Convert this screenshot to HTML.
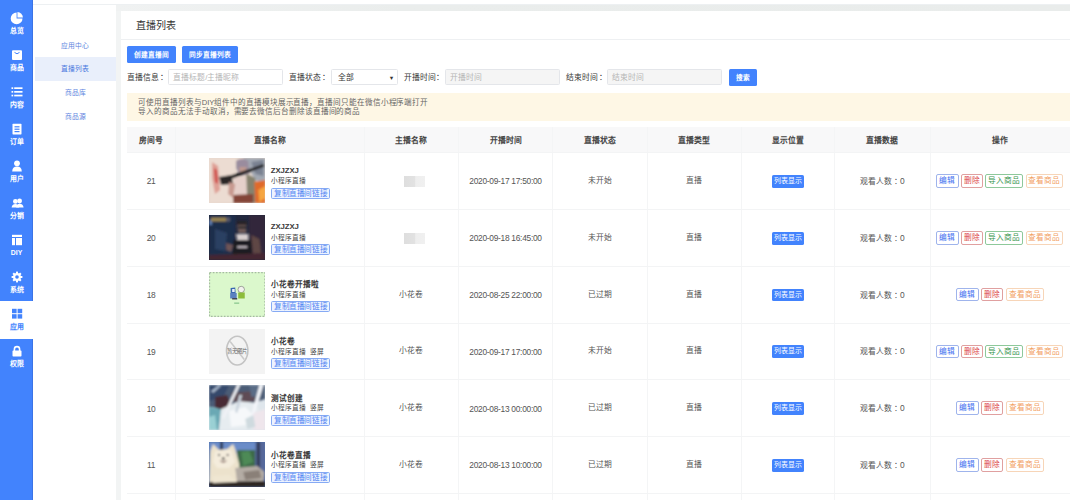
<!DOCTYPE html><html lang="zh-CN"><head><meta charset="utf-8"><style>
*{margin:0;padding:0;box-sizing:border-box;}
html,body{width:1070px;height:500px;overflow:hidden;background:#fff;font-family:"Liberation Sans",sans-serif;}
div,span{position:absolute;white-space:nowrap;}
.c{transform:translateX(-50%);}
#side{left:0;top:0;width:33.2px;height:500px;background:#4283fd;}
#sideedge{left:32.4px;top:0;width:0.8px;height:500px;background:#3b74e6;}
.si{left:0;width:33.2px;height:37px;color:#fff;font-size:6.9px;text-align:center;}
.si .lb{left:0;right:0;top:22px;line-height:8px;font-weight:bold;}
.si svg{position:absolute;left:10.6px;top:7px;}
.si.act{background:#fff;color:#4283fd;height:38px;}
#topline{left:33.2px;top:0;width:1037px;height:5.2px;background:#fff;border-bottom:0.5px solid #edf0f2;}
#side2{left:33.2px;top:5.2px;width:82.3px;height:495px;background:#fff;}
.s2{left:35px;width:80.5px;height:23.6px;line-height:23.6px;text-align:center;font-size:6.8px;color:#5f86e0;}
.s2.act{background:#e9effb;color:#4a78e0;}
#gap{left:115.5px;top:5.2px;width:954.5px;height:495px;background:#f2f4f4;}
#gapt{left:115.5px;top:5.2px;width:954.5px;height:5.4px;background:linear-gradient(90deg,#f0f2f2,#eaedec 30%,#e9eceb);}
#card{left:121px;top:10.6px;width:949px;height:489.4px;background:#fff;}
#title{left:135.5px;top:10.6px;height:29px;line-height:29px;font-size:10px;color:#333;}
#hline{left:121px;top:39.4px;width:949px;height:0.6px;background:#eef0f2;}
.btn{height:17.3px;line-height:17.3px;background:#4283fd;color:#fff;font-size:6.7px;font-weight:bold;text-align:center;border-radius:1.5px;}
.lbl{font-size:7.8px;color:#383838;line-height:17.6px;height:16px;}
.colon{position:relative;left:0.7px;}
.colon2{position:relative;left:1.5px;}
.inp{height:16px;border:0.6px solid #e4e6ea;border-radius:1.5px;font-size:7.8px;color:#b6b6b6;line-height:16.6px;padding-left:4px;background:#fff;}
.inp.dis{background:#f5f5f5;}
#banner{left:127.3px;top:92.6px;width:942.7px;height:28px;background:#fef7e5;color:#666;font-size:7.6px;letter-spacing:-0.08px;line-height:9.7px;padding:5.1px 0 0 11.2px;}
#thead{left:127px;top:127px;width:943px;height:25.5px;background:#f8f8f9;}
.hl{left:127px;width:943px;height:0.6px;background:#f3f4f5;}
.vl{width:0.6px;background:#f4f5f6;}
.th{font-size:7.8px;color:#444;font-weight:bold;line-height:10px;}
.td{font-size:7.8px;color:#555;line-height:10px;}
.dt{font-size:8.4px;letter-spacing:-0.28px;color:#555;line-height:10px;}
.thumb{left:208.9px;width:56.4px;height:45px;overflow:hidden;}
.t1{left:270.8px;font-size:7.6px;font-weight:bold;color:#3a3a3a;line-height:9px;}
.t2{left:270.9px;font-size:6.7px;color:#444;line-height:8px;}
.tag{left:271.3px;height:11.2px;width:58.6px;border:0.7px solid #86aaf4;background:#edf3ff;border-radius:1.6px;color:#5286f2;font-size:7.6px;letter-spacing:-0.4px;line-height:10px;text-align:center;}
.blue{height:12.8px;width:32.2px;background:#4283fd;color:#fff;font-size:6.9px;line-height:12.8px;text-align:center;border-radius:1.6px;}
.op{height:13.6px;line-height:12.6px;border:0.75px solid;border-radius:2px;font-size:7.7px;text-align:center;background:#fff;}
.op.e{border-color:#9fb4ec;color:#3f6ff0;}
.op.d{border-color:#e0a0a0;color:#dc4545;}
.op.i{border-color:#8ec99b;color:#38954e;}
.op.v{border-color:#f7d5b8;color:#f2a062;}
.blur{width:21px;height:11px;background:linear-gradient(90deg,#dedede,#e2e2e2 50%,#eeeeee 56%,#f0f0f0);filter:blur(0.7px);}
</style></head><body>
<div id="side"></div><div id="sideedge"></div>
<div class="si" style="top:5px"><svg width="14" height="14" viewBox="0 0 14 14" style="left:9.75px;top:6.5px;overflow:visible"><path d="M6.6 6.4 L6.6 0.5 A5.9 5.9 0 1 0 12.5 6.4 Z" fill="#fff"/><path d="M7.45 5.55 L7.45 0.1 A5.5 5.5 0 0 1 12.9 5.55 Z" fill="#fff"/></svg><div class="lb">总览</div></div>
<div class="si" style="top:42px"><svg width="12" height="12" viewBox="0 0 12 12"><rect x="1" y="1.2" width="10" height="9.8" rx="1" fill="#fff"/><path d="M3.5 3.4 Q6 6.2 8.5 3.4" stroke="#4283fd" stroke-width="1" fill="none"/></svg><div class="lb">商品</div></div>
<div class="si" style="top:79px"><svg width="12" height="12" viewBox="0 0 12 12"><g fill="#fff"><rect x="0.5" y="1.3" width="1.7" height="1.7"/><rect x="3.2" y="1.3" width="8.3" height="1.7"/><rect x="0.5" y="5" width="1.7" height="1.7"/><rect x="3.2" y="5" width="8.3" height="1.7"/><rect x="0.5" y="8.7" width="1.7" height="1.7"/><rect x="3.2" y="8.7" width="8.3" height="1.7"/></g></svg><div class="lb">内容</div></div>
<div class="si" style="top:116px"><svg width="12" height="12" viewBox="0 0 12 12"><rect x="1.5" y="0.8" width="9" height="10.6" rx="0.6" fill="#fff"/><rect x="3.5" y="3.2" width="5" height="1.2" fill="#4283fd"/><rect x="3.5" y="5.6" width="5" height="1.2" fill="#4283fd"/><rect x="3.5" y="8" width="5" height="1.2" fill="#4283fd"/></svg><div class="lb">订单</div></div>
<div class="si" style="top:153px"><svg width="12" height="12" viewBox="0 0 12 12"><circle cx="6" cy="3.3" r="2.9" fill="#fff"/><path d="M1.2 11.4 Q1.3 6.6 6 6.6 Q10.7 6.6 10.8 11.4 Z" fill="#fff"/></svg><div class="lb">用户</div></div>
<div class="si" style="top:190px"><svg width="13" height="12" viewBox="0 0 13 12"><circle cx="8.6" cy="4" r="2.4" fill="#fff"/><path d="M5.2 10.6 Q5.6 6.8 8.6 6.8 Q12.2 6.8 12.6 10.6 Z" fill="#fff"/><circle cx="4.4" cy="4.4" r="2.4" fill="#fff"/><path d="M0.6 10.6 Q1 7.1 4.4 7.1 Q7.8 7.1 8.2 10.6 Z" fill="#fff"/></svg><div class="lb">分销</div></div>
<div class="si" style="top:227px"><svg width="12" height="12" viewBox="0 0 12 12"><rect x="1" y="0.8" width="10" height="2.2" fill="#fff"/><rect x="1" y="4" width="3" height="7.2" fill="#fff"/><rect x="5" y="4" width="6" height="7.2" fill="#fff"/></svg><div class="lb">DIY</div></div>
<div class="si" style="top:264px"><svg width="12" height="12" viewBox="0 0 12 12"><g fill="#fff"><circle cx="6" cy="6" r="3.9"/><rect x="5" y="0.6" width="2" height="10.8"/><rect x="5" y="0.6" width="2" height="10.8" transform="rotate(45 6 6)"/><rect x="5" y="0.6" width="2" height="10.8" transform="rotate(90 6 6)"/><rect x="5" y="0.6" width="2" height="10.8" transform="rotate(135 6 6)"/></g><circle cx="6" cy="6" r="1.8" fill="#4283fd"/></svg><div class="lb">系统</div></div>
<div class="si act" style="top:301px"><svg width="12" height="12" viewBox="0 0 12 12"><g fill="#4283fd"><rect x="1" y="0.8" width="4.6" height="4.4"/><rect x="6.6" y="0.8" width="4.6" height="4.4"/><rect x="1" y="6.2" width="4.6" height="4.4"/><rect x="6.6" y="6.2" width="4.6" height="4.4"/></g></svg><div class="lb">应用</div></div>
<div class="si" style="top:338px"><svg width="12" height="12" viewBox="0 0 12 12"><path d="M3.4 6 V4.2 A2.6 2.6 0 0 1 8.6 4.2 V6" stroke="#fff" stroke-width="1.6" fill="none"/><rect x="1.5" y="5.6" width="9" height="6" rx="0.8" fill="#fff"/></svg><div class="lb">权限</div></div>
<div id="topline"></div><div id="side2"></div>
<div class="s2" style="top:33.80px">应用中心</div>
<div class="s2 act" style="top:57.40px">直播列表</div>
<div class="s2" style="top:81.00px">商品库</div>
<div class="s2" style="top:104.60px">商品源</div>
<div id="gap"></div><div id="gapt"></div><div id="card"></div><div id="title">直播列表</div><div id="hline"></div>
<div class="btn" style="left:127.2px;top:45.5px;width:48.8px;">创建直播间</div>
<div class="btn" style="left:182px;top:45.5px;width:56px;">同步直播列表</div>
<div class="lbl" style="left:127px;top:69.3px;">直播信息<span class="colon">：</span></div>
<div class="inp" style="left:168.2px;top:69.3px;width:115px;">直播标题/主播昵称</div>
<div class="lbl" style="left:289.3px;top:69.3px;">直播状态<span class="colon">：</span></div>
<div class="inp" style="left:331.3px;top:69.3px;width:66.5px;color:#333;padding-left:5.8px;">全部<span style="right:2.6px;top:0;font-size:5.6px;">▼</span></div>
<div class="lbl" style="left:403.7px;top:69.3px;">开播时间<span class="colon">：</span></div>
<div class="inp dis" style="left:444.5px;top:69.3px;width:115.8px;">开播时间</div>
<div class="lbl" style="left:566.3px;top:69.3px;">结束时间<span class="colon">：</span></div>
<div class="inp dis" style="left:607px;top:69.3px;width:114.8px;">结束时间</div>
<div class="btn" style="left:728.8px;top:69.2px;width:28.2px;height:17.3px;line-height:17.3px;">搜索</div>
<div id="banner">可使用直播列表与DIY组件中的直播模块展示直播，直播间只能在微信小程序端打开<br>导入的商品无法手动取消，需要去微信后台删除该直播间的商品</div>
<div id="thead"></div>
<div class="th c" style="left:151.10px;top:136.2px;">房间号</div>
<div class="th c" style="left:269.75px;top:136.2px;">直播名称</div>
<div class="th c" style="left:411.35px;top:136.2px;">主播名称</div>
<div class="th c" style="left:505.50px;top:136.2px;">开播时间</div>
<div class="th c" style="left:599.70px;top:136.2px;">直播状态</div>
<div class="th c" style="left:694.00px;top:136.2px;">直播类型</div>
<div class="th c" style="left:787.95px;top:136.2px;">显示位置</div>
<div class="th c" style="left:882.45px;top:136.2px;">直播数据</div>
<div class="th c" style="left:1000.10px;top:136.2px;">操作</div>
<div class="vl" style="left:174.90px;top:127px;height:373px;"></div>
<div class="vl" style="left:364.00px;top:127px;height:373px;"></div>
<div class="vl" style="left:458.10px;top:127px;height:373px;"></div>
<div class="vl" style="left:552.30px;top:127px;height:373px;"></div>
<div class="vl" style="left:646.50px;top:127px;height:373px;"></div>
<div class="vl" style="left:740.90px;top:127px;height:373px;"></div>
<div class="vl" style="left:834.40px;top:127px;height:373px;"></div>
<div class="vl" style="left:929.90px;top:127px;height:373px;"></div>
<div class="hl" style="top:152.20px;"></div>
<div class="hl" style="top:209.00px;"></div>
<div class="hl" style="top:265.80px;"></div>
<div class="hl" style="top:322.60px;"></div>
<div class="hl" style="top:379.40px;"></div>
<div class="hl" style="top:436.20px;"></div>
<div class="hl" style="top:493.00px;"></div>
<div class="dt c" style="left:151.10px;top:176.30px;">21</div>
<div class="thumb" style="top:158.10px;"><svg width="56.4" height="45" viewBox="0 0 56 45" preserveAspectRatio="none"><defs><filter id="b1" x="-5%" y="-5%" width="110%" height="110%"><feGaussianBlur stdDeviation="1"/></filter></defs><rect width="56" height="45" fill="#e6d8ce"/><g filter="url(#b1)"><rect x="0" y="0" width="26" height="45" fill="#ecdcd2"/><path d="M3 4 L9 8 L11 32 L6 36 L3 20Z" fill="#dfa096"/><path d="M5 10 L8 12 L9 26 L6 24Z" fill="#cf4a46"/><path d="M34 0 L56 0 L56 26 L46 22 L38 8Z" fill="#a2a8b2"/><path d="M42 4 L54 2 L54 18 L46 16Z" fill="#7a8292"/><path d="M27 3 Q33 -1 39 3 L40 16 L31 18 L27 10Z" fill="#9a8c9e"/><path d="M30 9 L37 9 L37 16 L31 16Z" fill="#c09a90"/><path d="M11 21 L54 6 L55 8.5 L13 24.5Z" fill="#1e1c1c"/><path d="M10 19 L22 17 L24 26 L12 27Z" fill="#2a2626"/><path d="M25 20 L39 18 L41 38 L26 40Z" fill="#e6d0ca"/><path d="M37 16 L46 20 L47 45 L38 45Z" fill="#86826e"/><path d="M45 24 L56 22 L56 45 L46 45Z" fill="#e06a2c"/><path d="M49 32 L56 28 L56 40 L50 44Z" fill="#f6a640"/><path d="M24 37 L44 36 L44 45 L24 45Z" fill="#844438"/><path d="M20 24 L26 26 L24 40 L19 36Z" fill="#c89a90"/></g></svg></div>
<div class="t1" style="top:165.60px;font-size:7.8px;letter-spacing:-0.1px;">ZXJZXJ</div>
<div class="t2" style="top:177.10px;">小程序直播</div>
<div class="tag" style="top:187.50px;">复制直播间链接</div>
<div class="blur" style="left:403.5px;top:175.90px;"></div>
<div class="dt c" style="left:505.50px;top:176.30px;">2020-09-17 17:50:00</div>
<div class="td c" style="left:599.70px;top:176.00px;">未开始</div>
<div class="td c" style="left:694.00px;top:176.00px;">直播</div>
<div class="blue" style="left:772.3px;top:175.00px;">列表显示</div>
<div class="td c" style="left:882.45px;top:176.00px;">观看人数<span class="colon2">：</span><span style="position:relative;font-size:8.4px">0</span></div>
<div class="op e" style="left:936.20px;top:174.15px;width:22.4px;">编辑</div>
<div class="op d" style="left:961.20px;top:174.15px;width:22.2px;">删除</div>
<div class="op i" style="left:985.30px;top:174.15px;width:37.8px;">导入商品</div>
<div class="op v" style="left:1025.60px;top:174.15px;width:37.8px;">查看商品</div>
<div class="dt c" style="left:151.10px;top:233.10px;">20</div>
<div class="thumb" style="top:214.90px;"><svg width="56.4" height="45" viewBox="0 0 56 45" preserveAspectRatio="none"><defs><filter id="b2" x="-5%" y="-5%" width="110%" height="110%"><feGaussianBlur stdDeviation="1"/></filter></defs><rect width="56" height="45" fill="#22283e"/><g filter="url(#b2)"><rect x="0" y="0" width="26" height="45" fill="#1e2e4c"/><rect x="0" y="5" width="3" height="5" fill="#5a7ab0"/><rect x="2" y="2.5" width="15" height="4" fill="#9a8450"/><rect x="17" y="2.5" width="4" height="4" fill="#5a5a6a"/><path d="M6 14 L18 18 L16 36 L6 34Z" fill="#2c4062"/><rect x="40" y="0" width="16" height="45" fill="#33263a"/><path d="M28 9 L37 9 L37 18 L29 18Z" fill="#6e5a58"/><path d="M28 6 L38 6 L38 10 L28 10Z" fill="#282026"/><path d="M29 11.5 L37 11.5 L37 13.5 L29 13.5Z" fill="#1a1a1e"/><path d="M27 19 L39 19 L39 25 L28 25Z" fill="#d6cece"/><path d="M24 25 L42 25 L43 42 L23 42Z" fill="#1c1a20"/><rect x="28" y="31" width="10" height="2" fill="#b8b0b8"/><path d="M42 20 L50 24 L52 40 L44 42Z" fill="#5e4644"/><path d="M17 28 L24 30 L22 37 L17 35Z" fill="#6e5456"/><path d="M0 40 L56 38 L56 45 L0 45Z" fill="#442830"/></g></svg></div>
<div class="t1" style="top:222.40px;font-size:7.8px;letter-spacing:-0.1px;">ZXJZXJ</div>
<div class="t2" style="top:233.90px;">小程序直播</div>
<div class="tag" style="top:244.30px;">复制直播间链接</div>
<div class="blur" style="left:403.5px;top:232.70px;"></div>
<div class="dt c" style="left:505.50px;top:233.10px;">2020-09-18 16:45:00</div>
<div class="td c" style="left:599.70px;top:232.80px;">未开始</div>
<div class="td c" style="left:694.00px;top:232.80px;">直播</div>
<div class="blue" style="left:772.3px;top:231.80px;">列表显示</div>
<div class="td c" style="left:882.45px;top:232.80px;">观看人数<span class="colon2">：</span><span style="position:relative;font-size:8.4px">0</span></div>
<div class="op e" style="left:936.20px;top:230.95px;width:22.4px;">编辑</div>
<div class="op d" style="left:961.20px;top:230.95px;width:22.2px;">删除</div>
<div class="op i" style="left:985.30px;top:230.95px;width:37.8px;">导入商品</div>
<div class="op v" style="left:1025.60px;top:230.95px;width:37.8px;">查看商品</div>
<div class="dt c" style="left:151.10px;top:289.90px;">18</div>
<div class="thumb" style="top:271.70px;"><svg width="56.4" height="45" viewBox="0 0 56 45" preserveAspectRatio="none"><rect width="56" height="45" fill="#dbf8cc"/><rect x="0.6" y="0.6" width="54.8" height="43.8" fill="none" stroke="#a6b8a4" stroke-width="1.1" stroke-dasharray="1.6 1.6"/><path d="M21.5 16 L26 15.5 L26.5 21 L21.5 21Z" fill="#3a68b0"/><path d="M23 17 L25.5 17 L25.5 20 L23 20Z" fill="#e8eef8"/><path d="M21 21 L27.5 21 L27.5 26.5 L21 26.5Z" fill="#5a80c0"/><circle cx="32" cy="17.5" r="3.2" fill="#f2f2ee" stroke="#555" stroke-width="0.5"/><path d="M29 20.5 L35.5 20.5 L35.5 26.5 L29 26.5Z" fill="#8cbc3a"/><path d="M23 26 L28 26 L28 27.5 L23 27.5Z" fill="#445"/><rect x="25" y="30.5" width="5" height="1.3" fill="#8cc890"/></svg></div>
<div class="t1" style="top:280.30px;">小花卷开播啦</div>
<div class="t2" style="top:290.70px;">小程序直播</div>
<div class="tag" style="top:301.10px;">复制直播间链接</div>
<div class="td c" style="left:411.35px;top:289.60px;">小花卷</div>
<div class="dt c" style="left:505.50px;top:289.90px;">2020-08-25 22:00:00</div>
<div class="td c" style="left:599.70px;top:289.60px;">已过期</div>
<div class="td c" style="left:694.00px;top:289.60px;">直播</div>
<div class="blue" style="left:772.3px;top:288.60px;">列表显示</div>
<div class="td c" style="left:882.45px;top:289.60px;">观看人数<span class="colon2">：</span><span style="position:relative;font-size:8.4px">0</span></div>
<div class="op e" style="left:956.30px;top:287.75px;width:22.4px;">编辑</div>
<div class="op d" style="left:981.30px;top:287.75px;width:22.2px;">删除</div>
<div class="op v" style="left:1006.10px;top:287.75px;width:37.8px;">查看商品</div>
<div class="dt c" style="left:151.10px;top:346.70px;">19</div>
<div class="thumb" style="top:328.50px;"><svg width="56.4" height="45" viewBox="0 0 56 45" preserveAspectRatio="none"><rect width="56" height="45" fill="#f3f3f3"/><ellipse cx="28" cy="21.6" rx="10.6" ry="14.4" fill="none" stroke="#c4c4c4" stroke-width="1.6"/><line x1="21" y1="12.5" x2="35" y2="30.5" stroke="#cacaca" stroke-width="1.5"/><text x="28" y="24.2" font-size="5.4" text-anchor="middle" fill="#666" font-family="Liberation Sans">暂无图片</text></svg></div>
<div class="t1" style="top:337.10px;">小花卷</div>
<div class="t2" style="top:347.50px;">小程序直播<span style="position:relative;margin-left:3.7px">竖屏</span></div>
<div class="tag" style="top:357.90px;">复制直播间链接</div>
<div class="td c" style="left:411.35px;top:346.40px;">小花卷</div>
<div class="dt c" style="left:505.50px;top:346.70px;">2020-09-17 17:00:00</div>
<div class="td c" style="left:599.70px;top:346.40px;">未开始</div>
<div class="td c" style="left:694.00px;top:346.40px;">直播</div>
<div class="blue" style="left:772.3px;top:345.40px;">列表显示</div>
<div class="td c" style="left:882.45px;top:346.40px;">观看人数<span class="colon2">：</span><span style="position:relative;font-size:8.4px">0</span></div>
<div class="op e" style="left:936.20px;top:344.55px;width:22.4px;">编辑</div>
<div class="op d" style="left:961.20px;top:344.55px;width:22.2px;">删除</div>
<div class="op i" style="left:985.30px;top:344.55px;width:37.8px;">导入商品</div>
<div class="op v" style="left:1025.60px;top:344.55px;width:37.8px;">查看商品</div>
<div class="dt c" style="left:151.10px;top:403.50px;">10</div>
<div class="thumb" style="top:385.30px;"><svg width="56.4" height="45" viewBox="0 0 56 45" preserveAspectRatio="none"><defs><filter id="b5" x="-5%" y="-5%" width="110%" height="110%"><feGaussianBlur stdDeviation="1"/></filter></defs><rect width="56" height="45" fill="#dfe6ec"/><g filter="url(#b5)"><path d="M0 0 L56 0 L56 14 L44 18 L30 16 L18 24 L0 22Z" fill="#4c5c76"/><path d="M0 0 L20 0 L14 12 L0 16Z" fill="#36486c"/><path d="M2 6 L10 0 L12 1 L4 8Z" fill="#a8b8cc"/><path d="M6 12 L18 10 L22 20 L12 26 L6 22Z" fill="#4a2c34"/><path d="M22 8 L44 6 L46 16 L30 18 L24 16Z" fill="#5e4c54"/><path d="M40 0 L54 0 L52 10 L42 12Z" fill="#5a6c86"/><path d="M0 22 L12 24 L10 45 L0 45Z" fill="#6aa8b4"/><path d="M0 32 L6 30 L8 45 L0 45Z" fill="#9ad0d4"/><path d="M12 24 L30 16 L46 18 L52 30 L50 45 L10 45Z" fill="#e6ecf0"/><path d="M20 26 L36 22 L44 30 L38 40 L22 42Z" fill="#f6f8fa"/><path d="M28 0 L31 0 L15 34 L13 32Z" fill="#f0f2f6"/><path d="M50 0 L54 0 L42 40 L40 38Z" fill="#f4f6fa"/><path d="M30 10 L33 10 L28 28 L26 27Z" fill="#c8d2dc"/><path d="M44 28 L56 24 L56 45 L44 45Z" fill="#efe6ec"/><path d="M36 34 L44 30 L46 42 L38 44Z" fill="#cfdadf"/></g></svg></div>
<div class="t1" style="top:393.90px;">测试创建</div>
<div class="t2" style="top:404.30px;">小程序直播<span style="position:relative;margin-left:3.7px">竖屏</span></div>
<div class="tag" style="top:414.70px;">复制直播间链接</div>
<div class="td c" style="left:411.35px;top:403.20px;">小花卷</div>
<div class="dt c" style="left:505.50px;top:403.50px;">2020-08-13 00:00:00</div>
<div class="td c" style="left:599.70px;top:403.20px;">已过期</div>
<div class="td c" style="left:694.00px;top:403.20px;">直播</div>
<div class="blue" style="left:772.3px;top:402.20px;">列表显示</div>
<div class="td c" style="left:882.45px;top:403.20px;">观看人数<span class="colon2">：</span><span style="position:relative;font-size:8.4px">0</span></div>
<div class="op e" style="left:956.30px;top:401.35px;width:22.4px;">编辑</div>
<div class="op d" style="left:981.30px;top:401.35px;width:22.2px;">删除</div>
<div class="op v" style="left:1006.10px;top:401.35px;width:37.8px;">查看商品</div>
<div class="dt c" style="left:151.10px;top:460.30px;">11</div>
<div class="thumb" style="top:442.10px;"><svg width="56.4" height="45" viewBox="0 0 56 45" preserveAspectRatio="none"><defs><filter id="b6" x="-5%" y="-5%" width="110%" height="110%"><feGaussianBlur stdDeviation="0.9"/></filter></defs><rect width="56" height="45" fill="#4f6fa8"/><g filter="url(#b6)"><rect x="0" y="0" width="56" height="9" fill="#6a8cc8"/><rect x="11" y="0" width="3" height="10" fill="#2e3a58"/><rect x="28" y="8" width="18" height="22" fill="#3c6a4a"/><path d="M32 10 L40 9 L44 20 L34 24Z" fill="#4e8a56"/><rect x="46" y="0" width="10" height="40" fill="#56689a"/><rect x="47.5" y="0" width="3" height="40" fill="#2e3650"/><path d="M1 10 L4 2 L10 8 L18 7 L24 2 L27 10 L30 22 L31 42 L0 42Z" fill="#ece2cc"/><path d="M6 9 L22 8 L26 20 L20 26 L8 26 L4 20Z" fill="#f4ecdc"/><circle cx="10" cy="13" r="1" fill="#2a2a2a"/><circle cx="18.5" cy="13" r="1" fill="#2a2a2a"/><ellipse cx="14.2" cy="16.6" rx="1.6" ry="1.1" fill="#1a1a1a"/><path d="M10.5 18.5 Q14.2 22.5 18 18.5 Q14.2 20 10.5 18.5Z" fill="#5a2a2a"/><path d="M26 26 L48 24 L55 30 L54 40 L28 41Z" fill="#b4aca4"/><path d="M34 30 L50 28 L52 36 L36 38Z" fill="#8a8078"/><path d="M0 40 L56 39 L56 45 L0 45Z" fill="#2e2622"/><path d="M4 34 L20 33 L28 40 L4 41Z" fill="#efe6d2"/></g></svg></div>
<div class="t1" style="top:450.70px;">小花卷直播</div>
<div class="t2" style="top:461.10px;">小程序直播<span style="position:relative;margin-left:3.7px">竖屏</span></div>
<div class="tag" style="top:471.50px;">复制直播间链接</div>
<div class="td c" style="left:411.35px;top:460.00px;">小花卷</div>
<div class="dt c" style="left:505.50px;top:460.30px;">2020-08-13 10:00:00</div>
<div class="td c" style="left:599.70px;top:460.00px;">已过期</div>
<div class="td c" style="left:694.00px;top:460.00px;">直播</div>
<div class="blue" style="left:772.3px;top:459.00px;">列表显示</div>
<div class="td c" style="left:882.45px;top:460.00px;">观看人数<span class="colon2">：</span><span style="position:relative;font-size:8.4px">0</span></div>
<div class="op e" style="left:956.30px;top:458.15px;width:22.4px;">编辑</div>
<div class="op d" style="left:981.30px;top:458.15px;width:22.2px;">删除</div>
<div class="op v" style="left:1006.10px;top:458.15px;width:37.8px;">查看商品</div>
<div class="thumb" style="top:498.90px;"><svg width="56.4" height="45"><rect width="56.4" height="45" fill="#ececec"/></svg></div>
</body></html>
